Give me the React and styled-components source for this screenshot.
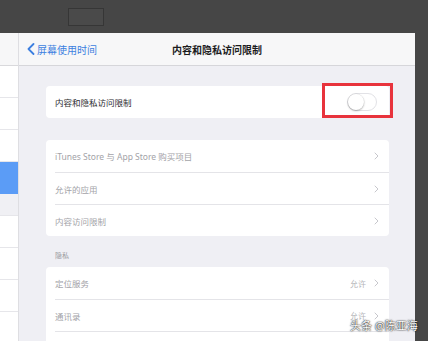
import React from 'react';
import styled, {createGlobalStyle} from 'styled-components';

const GlobalStyle = createGlobalStyle`
    html, body {
        margin: 0;
        padding: 0;
        background: #464646;
    }
    body {
        font-family: "Noto Sans", "Noto Sans CJK SC", sans-serif;
    }
`;

const StyledPage = styled.div`
    position: relative;
    width: 428px;
    height: 341px;
    overflow: hidden;
    display: grid;
    grid-template-rows: 33px 1fr;
    background: #464646;
`;

const StyledTopBar = styled.div`
    display: flex;
    align-items: center;
    padding-left: 68px;
`;

const StyledCameraSlot = styled.div`
    width: 34px;
    height: 16px;
    border: 1px solid #363636;
    background: #4a4a4a;
`;

const StyledScreen = styled.div`
    display: flex;
    margin-right: 13px;
    min-height: 0;
`;

const StyledSidebar = styled.div`
    width: 18px;
    flex-shrink: 0;
    background: #ffffff;
    border-right: 1px solid #dedee2;
`;

const StyledSidebarNav = styled.div`
    height: 32px;
    background: #f7f7f8;
    border-bottom: 1px solid #d9d9dc;
`;

const StyledSidebarRow = styled.div`
    height: 31px;
    border-bottom: 1px solid ${(props) => (props.selected ? '#5b9cf6' : '#e6e6ea')};
    background: ${(props) => (props.selected ? '#5b9cf6' : '#ffffff')};
`;

const StyledSidebarGap = styled.div`
    height: 21px;
    background: #f0f0f4;
    border-bottom: 1px solid #e6e6ea;
`;

const StyledMain = styled.div`
    flex: 1;
    display: flex;
    flex-direction: column;
    background: #efeff4;
`;

const StyledNavBar = styled.div`
    height: 32px;
    flex-shrink: 0;
    display: grid;
    grid-template-columns: 1fr auto 1fr;
    align-items: center;
    background: #f7f7f8;
    border-bottom: 1px solid #d6d6da;
    padding: 0 8px;
`;

const StyledBackLink = styled.div`
    display: flex;
    align-items: center;
    gap: 2px;
    color: #3d7fe0;
    font-size: 10px;
`;

const StyledTitle = styled.div`
    font-size: 10px;
    font-weight: 600;
    color: #1c1c1e;
`;

const StyledContent = styled.div`
    padding: 20px 26px 0 27px;
`;

const StyledCard = styled.div`
    position: relative;
    background: #ffffff;
    border-radius: 4px;
    margin-top: ${(props) => props.gap || 0}px;
`;

const StyledRow = styled.div`
    height: 32px;
    display: flex;
    align-items: center;
    padding: 0 10px 0 9px;
    font-size: 8.5px;
    color: ${(props) => (props.dim ? '#a3a3a8' : '#2b2b2e')};
    position: relative;

    & + & {
        height: 31px;
        border-top: 1px solid #e4e4e8;
        margin-left: 9px;
        padding-left: 0;
    }
`;

const StyledLabel = styled.span`
    flex: 1;
`;

const StyledDetail = styled.span`
    color: #b4b4b8;
    font-size: 8px;
    margin-right: 8px;
`;

const StyledToggle = styled.div`
    width: 30px;
    height: 18px;
    margin-right: 2px;
    border-radius: 9px;
    background: #ffffff;
    border: 1px solid #e2e2e6;
    box-sizing: border-box;
    display: flex;
    align-items: center;
`;

const StyledKnob = styled.div`
    width: 16px;
    height: 16px;
    border-radius: 50%;
    background: #ffffff;
    box-shadow: 0 1px 2px rgba(0, 0, 0, 0.28), 0 0 0 0.5px rgba(0, 0, 0, 0.08);
`;

const StyledHighlight = styled.div`
    position: absolute;
    left: 276px;
    top: -3px;
    width: 71px;
    height: 35px;
    box-sizing: border-box;
    border: 3px solid #e8333c;
`;

const StyledSectionHeader = styled.div`
    height: 31px;
    display: flex;
    align-items: flex-end;
    padding: 0 0 7px 9px;
    box-sizing: border-box;
    font-size: 7px;
    color: #9c9ca2;
`;

const StyledWatermark = styled.div`
    position: absolute;
    left: 350px;
    top: 317px;
    font-size: 11px;
    color: #ffffff;
    white-space: nowrap;
    text-shadow: 0 0 1px #000, 0 0 2px rgba(0, 0, 0, 0.8);
`;

const Chevron = ({color = '#c7c7cc'}) => (
    <svg width={5} height={8} viewBox={'0 0 5 8'}>
        <path d={'M1 1l3 3-3 3'} fill={'none'} stroke={color} strokeWidth={1} strokeLinecap={'round'} strokeLinejoin={'round'} />
    </svg>
);

const BackChevron = () => (
    <svg width={8} height={12} viewBox={'0 0 8 12'}>
        <path d={'M6.5 1L1.5 6l5 5'} fill={'none'} stroke={'#3d7fe0'} strokeWidth={1.8} strokeLinecap={'round'} strokeLinejoin={'round'} />
    </svg>
);

const storeRows = ['iTunes Store 与 App Store 购买项目', '允许的应用', '内容访问限制'];

const privacyRows = [
    {label: '定位服务', detail: '允许'},
    {label: '通讯录', detail: '允许'},
];

export default function App() {
    return (
        <StyledPage>
            <GlobalStyle />
            <StyledTopBar>
                <StyledCameraSlot />
            </StyledTopBar>
            <StyledScreen>
                <StyledSidebar>
                    <StyledSidebarNav />
                    <StyledSidebarRow />
                    <StyledSidebarRow />
                    <StyledSidebarRow />
                    <StyledSidebarRow selected />
                    <StyledSidebarGap />
                    <StyledSidebarRow />
                    <StyledSidebarRow />
                    <StyledSidebarRow />
                    <StyledSidebarRow />
                </StyledSidebar>
                <StyledMain>
                    <StyledNavBar>
                        <StyledBackLink>
                            <BackChevron />
                            {'屏幕使用时间'}
                        </StyledBackLink>
                        <StyledTitle>{'内容和隐私访问限制'}</StyledTitle>
                        <div />
                    </StyledNavBar>
                    <StyledContent>
                        <StyledCard>
                            <StyledRow>
                                <StyledLabel>{'内容和隐私访问限制'}</StyledLabel>
                                <StyledToggle>
                                    <StyledKnob />
                                </StyledToggle>
                            </StyledRow>
                            <StyledHighlight />
                        </StyledCard>
                        <StyledCard gap={22}>
                            {storeRows.map((label) => (
                                <StyledRow dim key={label}>
                                    <StyledLabel>{label}</StyledLabel>
                                    <Chevron />
                                </StyledRow>
                            ))}
                        </StyledCard>
                        <StyledSectionHeader>{'隐私'}</StyledSectionHeader>
                        <StyledCard>
                            {privacyRows.map((row) => (
                                <StyledRow dim key={row.label}>
                                    <StyledLabel>{row.label}</StyledLabel>
                                    <StyledDetail>{row.detail}</StyledDetail>
                                    <Chevron />
                                </StyledRow>
                            ))}
                            <StyledRow dim />
                        </StyledCard>
                    </StyledContent>
                </StyledMain>
            </StyledScreen>
            <StyledWatermark>{'头条 @陈亚海'}</StyledWatermark>
        </StyledPage>
    );
}
